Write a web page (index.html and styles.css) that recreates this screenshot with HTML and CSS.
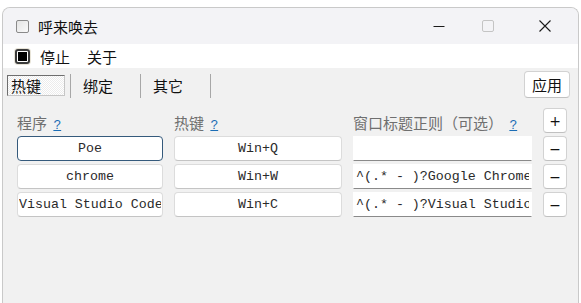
FILE: index.html
```html
<!DOCTYPE html>
<html lang="zh-CN">

<head>
    <meta charset="UTF-8">
    <meta name="viewport" content="width=device-width, initial-scale=1.0">
    <title>呼来唤去</title>
    <link rel="stylesheet" href="styles.css">
</head>

<body>
    <div class="window">
        <div class="titlebar">
            <span class="title-check"></span>
            <span class="title-text">呼来唤去</span>
            <div class="caption">
                <span class="cap-btn cap-min">
                    <svg width="12" height="12" viewBox="0 0 12 12"><path d="M0.5 6.5h11" stroke="#1a1a1a" stroke-width="1"/></svg>
                </span>
                <span class="cap-btn cap-max">
                    <svg width="12" height="12" viewBox="0 0 12 12"><rect x="0.5" y="0.5" width="11" height="11" rx="1.5" fill="none" stroke="#c4c4c4"/></svg>
                </span>
                <span class="cap-btn cap-close">
                    <svg width="12" height="12" viewBox="0 0 12 12"><path d="M0.5 0.5l11 11M11.5 0.5l-11 11" stroke="#1a1a1a" stroke-width="1.1"/></svg>
                </span>
            </div>
        </div>

        <div class="menubar">
            <span class="menu-check"><span></span></span>
            <span class="menu-item">停止</span>
            <span class="menu-item">关于</span>
        </div>

        <div class="content">
            <div class="tabbar">
                <div class="tab tab-active"><span class="tab-box">热键</span></div>
                <div class="tab">绑定</div>
                <div class="tab">其它</div>
                <button class="btn apply-btn">应用</button>
            </div>

            <div class="grid">
                <div class="label">程序 <a class="help">?</a></div>
                <div class="label">热键 <a class="help">?</a></div>
                <div class="label">窗口标题正则（可选） <a class="help">?</a></div>
                <button class="btn row-btn">+</button>

                <input class="field field-center field-focus" value="Poe">
                <input class="field field-center" value="Win+Q">
                <input class="field field-regex" value="">
                <button class="btn row-btn">−</button>

                <input class="field field-center" value="chrome">
                <input class="field field-center" value="Win+W">
                <input class="field field-regex" value="^(.* - )?Google Chrome">
                <button class="btn row-btn">−</button>

                <input class="field field-center" value="Visual Studio Code">
                <input class="field field-center" value="Win+C">
                <input class="field field-regex" value="^(.* - )?Visual Studio Code">
                <button class="btn row-btn">−</button>
            </div>
        </div>
    </div>
</body>

</html>
```

FILE: styles.css
```css
html,
body {
    margin: 0;
    height: 100%;
    overflow: hidden;
    background: #fff;
}

body {
    font-family: "Noto Sans CJK SC", "Liberation Sans", sans-serif;
    font-size: 15px;
    color: #111;
}

.window {
    margin: 7px 0 0 2px;
    width: 575px;
    height: calc(100vh - 8px);
    border: 1px solid #c9c9c9;
    border-bottom: none;
    border-radius: 8px 8px 0 0;
    overflow: hidden;
    display: flex;
    flex-direction: column;
    background: #f1f1f1;
}

.titlebar {
    height: 36px;
    display: flex;
    align-items: center;
    padding-left: 13px;
    background: #f3f3f6;
}

.title-check {
    width: 11px;
    height: 11px;
    border: 1px solid #8a8a8a;
    border-radius: 2px;
    background: linear-gradient(135deg, #e4e4e4, #fafafa);
}

.title-text {
    margin-left: 9px;
    line-height: 1;
}

.caption {
    margin-left: auto;
    display: flex;
    height: 100%;
}

.cap-btn {
    display: flex;
    align-items: center;
    justify-content: center;
    height: 100%;
}

.cap-min {
    width: 49px;
}

.cap-max {
    width: 49px;
}

.cap-close {
    width: 66px;
}

.menubar {
    height: 24px;
    display: flex;
    align-items: center;
    padding-left: 12px;
    background: #fff;
}

.menu-check {
    width: 9px;
    height: 9px;
    border: 2px solid #3a3a3a;
    border-radius: 3px;
    padding: 1px;
    box-shadow: 0 0 0 1px #e8e4d8;
    display: flex;
}

.menu-check span {
    flex: 1;
    background: #000;
}

.menu-item {
    line-height: 1;
    margin-left: 10px;
    margin-right: 7px;
}

.content {
    flex: 1;
    padding: 2px 8px 0 4px;
}

.tabbar {
    display: flex;
    align-items: center;
    height: 29px;
}

.tab {
    height: 24px;
    margin-top: 2px;
    width: 57px;
    padding-left: 12px;
    border-right: 1px solid #a7a7a7;
    display: flex;
    align-items: center;
    line-height: 1;
}

.tab-active {
    width: 63px;
    padding-left: 0;
}

.tab-box {
    width: 53px;
    height: 19px;
    padding-left: 3px;
    display: flex;
    align-items: center;
    border: 1px solid;
    border-color: #6e6e6e #c6c6c6 #c6c6c6 #6e6e6e;
    background: repeating-conic-gradient(#fff 0 25%, #ececec 0 50%) 0 0 / 2px 2px;
}

.btn {
    font-family: "Noto Sans CJK SC", "Liberation Sans", sans-serif;
    background: #fff;
    border: 1px solid #d2d2d2;
    border-bottom-color: #c0c0c0;
    border-radius: 4px;
    color: #111;
    padding: 0;
    cursor: pointer;
}

.apply-btn {
    margin-left: auto;
    margin-top: -1px;
    width: 46px;
    height: 27px;
    font-size: 15px;
    line-height: 1;
}

.grid {
    margin: 9px 0 0 10px;
    display: grid;
    grid-template-columns: 146px 168px 179px 24px;
    grid-template-rows: 25px 25px 25px 25px;
    column-gap: 11px;
    row-gap: 3px;
    align-items: center;
}

.label {
    align-self: end;
    padding-bottom: 1px;
    color: #6f6f6f;
    line-height: 1;
    white-space: nowrap;
}

.help {
    color: #1b6db5;
    text-decoration: underline;
    font-family: "Liberation Mono", monospace;
    font-size: 13px;
    margin-left: 3px;
}

.row-btn {
    width: 24px;
    height: 25px;
    font-size: 14px;
    font-family: "DejaVu Sans", sans-serif;
    line-height: 1;
}

.field {
    box-sizing: border-box;
    width: 100%;
    height: 25px;
    margin: 0;
    font-family: "Liberation Mono", monospace;
    font-size: 13.3px;
    color: #2a2a2a;
    background: #fff;
    border: 1px solid #dcdcdc;
    border-bottom-color: #c4c4c4;
    border-radius: 4px;
    padding: 0 1px;
    outline: none;
}

.field-center {
    text-align: center;
}

.field-focus {
    border-color: #355a7c;
}

.field-regex {
    border-radius: 0;
    border-color: #fff;
    border-bottom-color: #8a8a8a;
    padding: 0 2px;
}
```
